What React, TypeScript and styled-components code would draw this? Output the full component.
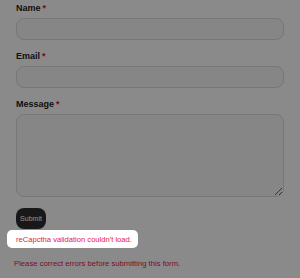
import * as React from "react";
import styled, { createGlobalStyle } from "styled-components";

const GlobalStyle = createGlobalStyle`
  html, body {
    margin: 0;
    padding: 0;
    background: #ffffff;
    font-family: "Liberation Sans", Arial, sans-serif;
  }
`;

const Page = styled.form`
  width: 300px;
  height: 278px;
  box-sizing: border-box;
  padding: 3px 16px 0;
  overflow: hidden;
`;

const Field = styled.div`
  display: flex;
  flex-direction: column;
  gap: 4px;
  margin-bottom: 11px;
`;

const Label = styled.label`
  font-size: 9px;
  line-height: 11px;
  font-weight: 700;
  color: #222222;
`;

const Required = styled.span`
  color: #d0103a;
  margin-left: 2px;
`;

const Input = styled.input`
  box-sizing: border-box;
  width: 100%;
  height: 22px;
  border: 1px solid #dcdcdc;
  border-radius: 8px;
  background: #f7f7f7;
  outline: none;
`;

const TextArea = styled.textarea`
  box-sizing: border-box;
  width: 100%;
  height: 83px;
  border: 1px solid #dcdcdc;
  border-radius: 8px;
  background: #f7f7f7;
  outline: none;
  resize: vertical;
  display: block;
`;

const SubmitButton = styled.button`
  margin-top: 2px;
  width: 30px;
  height: 21px;
  padding: 0;
  border: none;
  border-radius: 8px;
  background: #2e2e2e;
  color: #ffffff;
  font-family: inherit;
  font-size: 7px;
  display: block;
`;

// dims everything except the highlighted message
const Dimmer = styled.div`
  position: fixed;
  inset: 0;
  background: rgba(0, 0, 0, 0.46);
  z-index: 1;
`;

const Highlight = styled.div`
  position: relative;
  z-index: 2;
  width: 131px;
  height: 18px;
  margin: 1px 0 0 -9px;
  box-sizing: border-box;
  padding-left: 9px;
  display: flex;
  align-items: center;
  white-space: nowrap;
  background: #ffffff;
  border-radius: 5px;
  color: #e8173f;
  font-size: 7.6px;
`;

const ErrorText = styled.p`
  margin: 11px 0 0 -2px;
  font-size: 7.7px;
  line-height: 10px;
  white-space: nowrap;
  color: #e8173f;
`;

const fields = [
  { id: "name", label: "Name" },
  { id: "email", label: "Email" },
];

export default function App() {
  return (
    <>
      <GlobalStyle />
      <Page onSubmit={(e) => e.preventDefault()}>
        {fields.map((f) => (
          <Field key={f.id}>
            <Label htmlFor={f.id}>
              {f.label}
              <Required>*</Required>
            </Label>
            <Input id={f.id} />
          </Field>
        ))}
        <Field>
          <Label htmlFor="message">
            Message
            <Required>*</Required>
          </Label>
          <TextArea id="message" />
        </Field>
        <SubmitButton type="submit">Submit</SubmitButton>
        <Highlight>reCapctha validation couldn't load.</Highlight>
        <ErrorText>Please correct errors before submitting this form.</ErrorText>
      </Page>
      <Dimmer />
    </>
  );
}
